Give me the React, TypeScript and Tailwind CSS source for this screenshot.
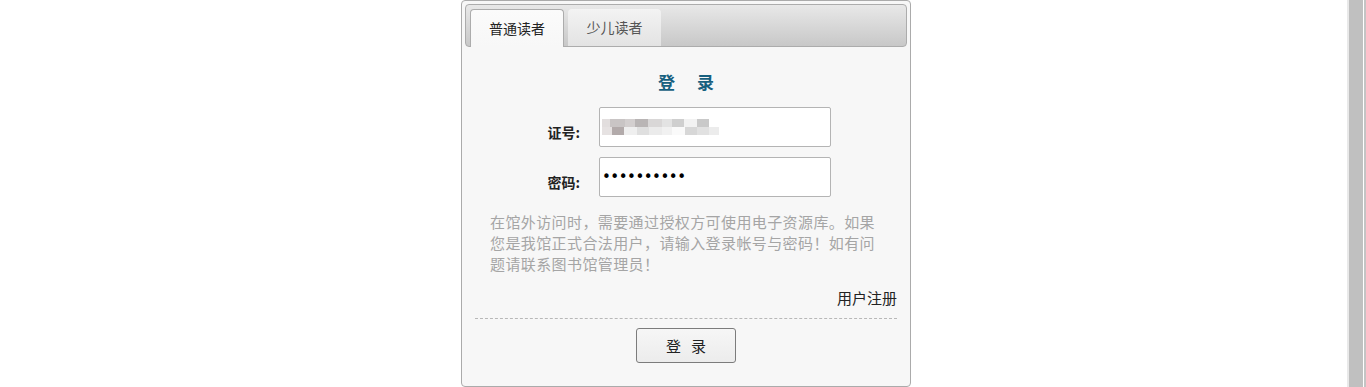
import React from "react";

const font = { fontFamily: '"Noto Sans CJK SC", "Liberation Sans", sans-serif' };

function Mosaic() {
  const r1: [number, number, string][] = [
    [0, 8, "#e2dede"], [8, 15, "#c9c5c5"], [23, 10, "#d3cfcf"], [33, 13, "#b9b5b5"],
    [46, 14, "#d9d7d7"], [60, 10, "#e3e3e3"], [70, 12, "#cfcfcf"], [82, 13, "#f2f2f2"], [95, 12, "#c9c9c9"],
  ];
  const r2: [number, number, string][] = [
    [0, 10, "#e6e2e2"], [10, 12, "#b2aaaa"], [22, 13, "#efefef"], [35, 12, "#dfdfdf"],
    [47, 13, "#ebebeb"], [60, 10, "#f1f1f1"], [70, 13, "#fafafa"], [83, 12, "#d7d7d7"],
    [95, 12, "#e1e1e1"], [107, 10, "#ececec"],
  ];
  return (
    <svg width="120" height="18" viewBox="0 0 120 18">
      <defs>
        <filter id="b" x="-5%" y="-20%" width="110%" height="140%">
          <feGaussianBlur stdDeviation="0.6" />
        </filter>
      </defs>
      <g filter="url(#b)">
        {r1.map(([x, w, c], i) => (
          <rect key={"a" + i} x={x} y={1} width={w} height={8} fill={c} />
        ))}
        {r2.map(([x, w, c], i) => (
          <rect key={"b" + i} x={x} y={9} width={w} height={8} fill={c} />
        ))}
      </g>
    </svg>
  );
}

export default function App() {
  return (
    <div className="flex min-h-[387px] bg-white" style={font}>
      <div className="flex-1">
        <div className="ml-[461px] box-border h-[387px] w-[450px] rounded-[4px] border border-[#ababab] bg-[#f7f7f7] p-[3px]">
          {/* tab header */}
          <div className="box-border flex h-[43px] items-end rounded-[4px] border border-[#acacac] bg-linear-to-b from-[#e8e8e8] to-[#c8c8c8] pl-[4px]">
            <div className="relative -mb-px box-border flex h-[38px] w-[94px] items-center justify-center rounded-t-[4px] border border-b-0 border-[#acacac] bg-linear-to-b from-[#fbfbfb] to-[#f7f7f7] pb-[2px] text-[14px] leading-[20px] text-[#222]">
              普通读者
            </div>
            <div className="ml-[4px] box-border flex h-[37px] w-[93px] items-center justify-center rounded-t-[4px] bg-linear-to-b from-[#f3f3f3] to-[#e3e3e3] pb-[1px] text-[14px] leading-[20px] text-[#555]">
              少儿读者
            </div>
          </div>

          {/* content */}
          <div className="px-[10px]">
            <div className="mt-[25px] flex h-[20px] items-center justify-center gap-[22px] text-[17px] font-bold leading-[20px] text-[#17607f]">
              <span>登</span>
              <span>录</span>
            </div>

            <div className="mt-[15px] flex items-center">
              <div className="mt-[9px] w-[105px] text-right text-[14px] font-bold leading-[20px] text-[#222]">证号:</div>
              <div className="ml-[19px] box-border flex h-[40px] w-[232px] items-center rounded-[2px] border border-[#b4b4b4] bg-white pl-[2px]">
                <Mosaic />
              </div>
            </div>

            <div className="mt-[10px] flex items-center">
              <div className="mt-[9px] w-[105px] text-right text-[14px] font-bold leading-[20px] text-[#222]">密码:</div>
              <input
                type="password"
                readOnly
                value="abcdefghij"
                className="ml-[19px] box-border h-[40px] w-[232px] rounded-[2px] border border-[#b4b4b4] bg-white pl-[2px] text-[15px] tracking-[-0.5px] text-black outline-none"
                style={{ fontFamily: '"DejaVu Sans", sans-serif' }}
              />
            </div>

            <div className="mt-[14px] pl-[15px] text-[15px] leading-[21px] tracking-[0.4px] text-[#a5a5a5]">
              <div className="whitespace-nowrap">在馆外访问时，需要通过授权方可使用电子资源库。如果</div>
              <div className="whitespace-nowrap">您是我馆正式合法用户，请输入登录帐号与密码！如有问</div>
              <div className="whitespace-nowrap">题请联系图书馆管理员！</div>
            </div>

            <div className="mt-[13px] text-right text-[15px] leading-[21px] text-[#222]">用户注册</div>

            <div className="mt-[10px] border-t border-dashed border-[#b8b8b8]" />

            <div className="mt-[9px] flex justify-center">
              <div className="box-border flex h-[35px] w-[100px] items-center justify-center gap-[10px] rounded-[3px] border border-[#7c7c7c] bg-linear-to-b from-[#f6f6f6] to-[#ececec] text-[15px] leading-[20px] text-[#222]">
                <span>登</span>
                <span>录</span>
              </div>
            </div>
          </div>
        </div>
      </div>

      {/* right side strip */}
      <div className="flex w-[19px] shrink-0">
        <div className="w-[2px] bg-[#e9e9e9]" />
        <div className="w-[14px] bg-[#c0c0c0]" />
        <div className="w-[1px] bg-white" />
        <div className="w-[2px] bg-[#c4c4c4]" />
      </div>
    </div>
  );
}
